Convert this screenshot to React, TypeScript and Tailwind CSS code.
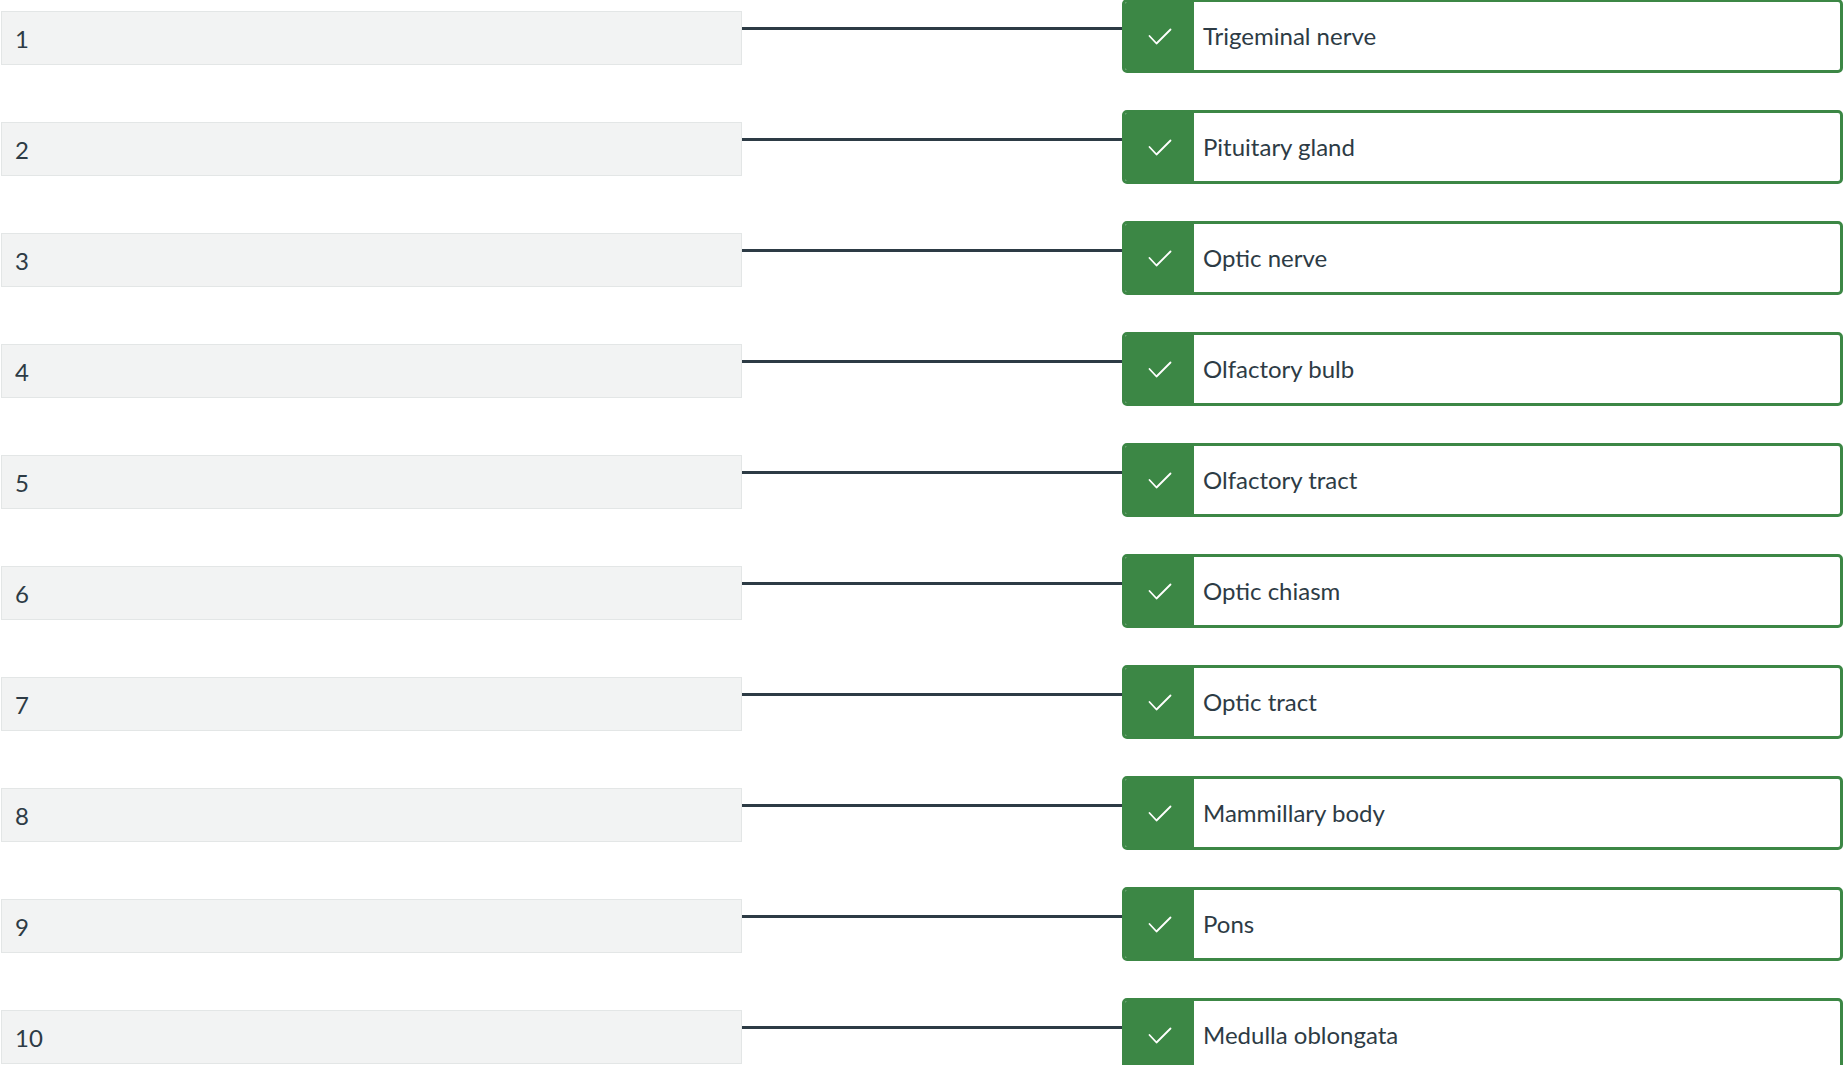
import React from "react"

const answers = [
  "Trigeminal nerve",
  "Pituitary gland",
  "Optic nerve",
  "Olfactory bulb",
  "Olfactory tract",
  "Optic chiasm",
  "Optic tract",
  "Mammillary body",
  "Pons",
  "Medulla oblongata",
]

function Check() {
  return (
    <svg width="24" height="17" viewBox="0 0 24 17" fill="none">
      <path d="M1.5 8 L8.5 15.5 L22.5 1.5" stroke="white" strokeWidth="1.8" strokeLinecap="round" strokeLinejoin="round" />
    </svg>
  )
}

export default function App() {
  return (
    <div
      className="w-[1846px] h-[1066px] overflow-hidden bg-white text-[#2d3b45] -mt-px"
      style={{ fontFamily: "Lato, 'Noto Sans', sans-serif" }}
    >
      <div className="flex flex-col gap-[37px]">
        {answers.map((label, i) => (
          <div key={label} className="flex items-start">
            {/* prompt box */}
            <div className="ml-px mt-[12px] w-[741px] h-[54px] bg-[#f2f3f3] border border-[#e3e6e6] flex items-center pl-[13px] pt-[1px] text-[24px]">
              {i + 1}
            </div>
            {/* connector */}
            <div className="mt-[28px] w-[380px] h-[3px] bg-[#2d3b45]" />
            {/* answer */}
            <div className="w-[721px] h-[74px] border-[3px] border-[#3c8745] rounded-[5px] flex items-stretch overflow-hidden">
              <div className="w-[69px] bg-[#3c8745] flex items-center justify-center">
                <Check />
              </div>
              <div className="flex items-center pl-[9px] text-[24px]">{label}</div>
            </div>
          </div>
        ))}
      </div>
    </div>
  )
}
